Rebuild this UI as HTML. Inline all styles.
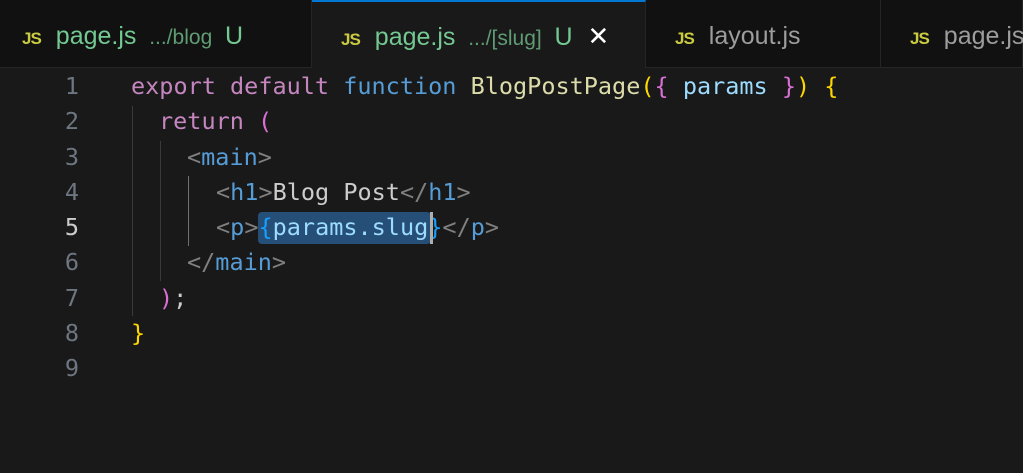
<!DOCTYPE html><html><head><style>
body{margin:0;width:1023px;height:473px;background:#191919;overflow:hidden;font-family:"Liberation Sans",sans-serif}
.tabs{position:absolute;top:0;left:0;width:1023px;height:67px;background:#111111;border-bottom:1px solid #252525}
.tab{position:absolute;top:0;height:67px;border-right:1px solid #252525;font-size:25px;line-height:72px;white-space:nowrap;box-sizing:border-box}
.js{color:#cbcb41;font-weight:bold;font-size:17px;margin-right:15px;letter-spacing:-1px}
.g{color:#73c991}.d{color:#5f9c74;font-size:21px}
.code{position:absolute;top:69px;left:0;font-family:"DejaVu Sans Mono",monospace;font-size:23.5px;line-height:35.3px;color:#cccccc}
.row{position:relative;height:35.3px}
.row>span{white-space:pre}
.ln{position:absolute;left:0;width:79px;text-align:right;color:#6e7681}
.k{color:#c586c0}.b{color:#569cd6}.f{color:#dcdcaa}.y{color:#ffd700}.pk{color:#da70d6}.v{color:#9cdcfe}.t{color:#808080}.tg{color:#569cd6}.bl{color:#179fff}
.guide{position:absolute;width:1px;background:#3a3a3a}
</style></head><body>
<div class="tabs">
<div class="tab" style="left:0;width:312px;padding-left:22px"><span class="js">JS</span><span class="g">page.js</span> <span class="d">&nbsp;.../blog&nbsp;</span> <span class="g">U</span></div>
<div class="tab" style="left:312px;width:334px;padding-left:29px;background:#191919;border-top:2px solid #0078d4;line-height:68px;height:68px"><span class="js">JS</span><span class="g">page.js</span> <span class="d">&nbsp;.../[slug]&nbsp;</span> <span class="g">U</span> <span style="color:#fff;font-size:26px;margin-left:8px">✕</span></div>
<div class="tab" style="left:646px;width:235px;padding-left:29px"><span class="js">JS</span><span style="color:#9d9d9d">layout.js</span></div>
<div class="tab" style="left:881px;width:142px;padding-left:29px"><span class="js">JS</span><span style="color:#9d9d9d">page.js</span></div>
</div>
<div class="guide" style="left:132px;top:106px;height:210px"></div>
<div class="guide" style="left:160px;top:141px;height:140px"></div>
<div class="guide" style="left:188px;top:176px;height:70px;background:#707070"></div>
<div style="position:absolute;left:258px;top:212px;width:173px;height:32px;background:#264f78;border-radius:4px"></div>
<div style="position:absolute;left:430px;top:212px;width:3px;height:32px;background:#aeafad;z-index:2"></div>
<div class="code">
<div class="row"><span class="ln">1</span><span style="position:absolute;left:131px"><span class="k">export default </span><span class="b">function </span><span class="f">BlogPostPage</span><span class="y">(</span><span class="pk">{ </span><span class="v">params </span><span class="pk">}</span><span class="y">) {</span></span></div>
<div class="row"><span class="ln">2</span><span style="position:absolute;left:159px"><span class="k">return </span><span class="pk">(</span></span></div>
<div class="row"><span class="ln">3</span><span style="position:absolute;left:187px"><span class="t">&lt;</span><span class="tg">main</span><span class="t">&gt;</span></span></div>
<div class="row"><span class="ln">4</span><span style="position:absolute;left:216px"><span class="t">&lt;</span><span class="tg">h1</span><span class="t">&gt;</span>Blog Post<span class="t">&lt;/</span><span class="tg">h1</span><span class="t">&gt;</span></span></div>
<div class="row"><span class="ln" style="color:#ccc">5</span><span style="position:absolute;left:216px"><span class="t">&lt;</span><span class="tg">p</span><span class="t">&gt;</span><span class="bl">{</span><span class="v">params.slug</span><span class="bl">}</span><span class="t">&lt;/</span><span class="tg">p</span><span class="t">&gt;</span></span></div>
<div class="row"><span class="ln">6</span><span style="position:absolute;left:187px"><span class="t">&lt;/</span><span class="tg">main</span><span class="t">&gt;</span></span></div>
<div class="row"><span class="ln">7</span><span style="position:absolute;left:159px"><span class="pk">)</span>;</span></div>
<div class="row"><span class="ln">8</span><span style="position:absolute;left:131px"><span class="y">}</span></span></div>
<div class="row"><span class="ln">9</span></div>
</div>
</body></html>
